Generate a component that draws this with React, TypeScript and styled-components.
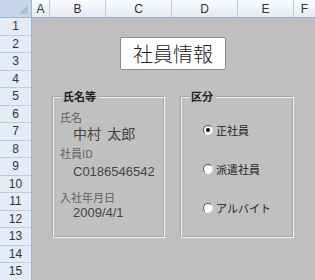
import React from "react";
import styled, { createGlobalStyle } from "styled-components";

const GlobalStyle = createGlobalStyle`
  html, body {
    margin: 0;
    padding: 0;
    background: #c0c0c0;
  }
`;

const Sheet = styled.div`
  width: 315px;
  height: 280px;
  overflow: hidden;
  display: grid;
  grid-template-columns: 32px 1fr;
  grid-template-rows: 18px 1fr;
  background: #c0c0c0;
  font-family: "Liberation Sans", Arial, sans-serif;
`;

const Corner = styled.div`
  background: #c7d6ec;
  border-right: 1px solid #9eb6ce;
  border-bottom: 1px solid #9eb6ce;
  box-sizing: border-box;
  display: flex;
  align-items: flex-end;
  justify-content: flex-end;
  padding: 0 3px 3px 0;
`;

const ColHeaders = styled.div`
  display: flex;
  border-bottom: 1px solid #9eb6ce;
  box-sizing: border-box;
`;

const ColCell = styled.div<{ $w: number }>`
  flex: 0 0 ${(p) => p.$w}px;
  box-sizing: border-box;
  border-right: 1px solid #bccbe0;
  background: linear-gradient(#fafcfe, #e3eaf4);
  color: #333;
  font-size: 12px;
  display: flex;
  align-items: center;
  justify-content: center;
  &:last-child {
    flex: 1;
    border-right: none;
  }
`;

const RowHeaders = styled.div`
  display: flex;
  flex-direction: column;
  border-right: 1px solid #9eb6ce;
`;

const RowCell = styled.div`
  flex: 0 0 17.5px;
  box-sizing: border-box;
  border-bottom: 1px solid #bccbe0;
  background: #e4ecf7;
  color: #333;
  font-size: 12px;
  display: flex;
  align-items: center;
  justify-content: center;
`;

const Canvas = styled.div`
  display: flex;
  flex-direction: column;
  padding-top: 19px;
  font-family: "Noto Sans CJK JP", "Liberation Sans", sans-serif;
`;

const TitleBox = styled.div`
  margin-left: 88px;
  width: 106px;
  height: 33px;
  box-sizing: border-box;
  background: #fff;
  border: 1px solid #8a8a8a;
  border-radius: 2px;
  display: flex;
  align-items: center;
  justify-content: center;
  font-size: 20px;
  font-weight: 300;
  color: #222;
`;

const Groups = styled.div`
  display: flex;
  gap: 15px;
  margin-top: 20px;
  margin-left: 20px;
`;

const Group = styled.fieldset<{ $w: number }>`
  margin: 0;
  width: ${(p) => p.$w}px;
  height: 148px;
  box-sizing: border-box;
  padding: 0 0 0 7px;
  border: 1px solid;
  border-color: #a4a4a4 #f4f4ec #f4f4ec #a4a4a4;
  box-shadow: inset 1px 1px 0 #f4f4ec, inset -1px -1px 0 #a4a4a4;
  display: flex;
  flex-direction: column;
`;

const Legend = styled.legend`
  margin-left: 1px;
  padding: 0 3px 0 2px;
  background: #c0c0c0;
  font-size: 11px;
  font-weight: bold;
  line-height: 12px;
  color: #222;
`;

const Field = styled.div<{ $mt: number }>`
  margin-top: ${(p) => p.$mt}px;
  display: flex;
  flex-direction: column;
`;

const Label = styled.div`
  font-size: 11px;
  line-height: 14px;
  color: #606060;
`;

const Value = styled.div<{ $mono?: boolean; $lh?: number }>`
  margin-left: 13px;
  font-size: ${(p) => (p.$mono ? 13 : 14)}px;
  line-height: ${(p) => p.$lh ?? 19}px;
  color: #444;
  font-family: ${(p) =>
    p.$mono ? `"Liberation Sans", Arial, sans-serif` : `"Noto Sans CJK JP", sans-serif`};
`;

const RadioList = styled.div`
  display: flex;
  flex-direction: column;
  gap: 28px;
  margin-top: 22px;
  margin-left: 15px;
`;

const RadioRow = styled.div`
  display: flex;
  align-items: center;
  gap: 3px;
  height: 11px;
  font-size: 11px;
  color: #222;
`;

const RadioDot = styled.span<{ $on?: boolean }>`
  width: 10px;
  height: 10px;
  box-sizing: border-box;
  border-radius: 50%;
  background: #fff;
  border: 1px solid;
  border-color: #555 #e8e8e8 #f4f4f4 #555;
  display: flex;
  align-items: center;
  justify-content: center;
  &::after {
    content: "";
    width: 4px;
    height: 4px;
    border-radius: 50%;
    background: ${(p) => (p.$on ? "#000" : "transparent")};
  }
`;

const columns: [string, number][] = [
  ["A", 18],
  ["B", 56],
  ["C", 66],
  ["D", 66],
  ["E", 56],
  ["F", 21],
];

const kubun = [
  { label: "正社員", on: true },
  { label: "派遣社員", on: false },
  { label: "アルバイト", on: false },
];

const App: React.FC = () => {
  return (
    <>
      <GlobalStyle />
      <Sheet>
        <Corner>
          <svg width="9" height="9" viewBox="0 0 9 9">
            <polygon points="9,0 9,9 0,9" fill="#aebdd3" />
          </svg>
        </Corner>
        <ColHeaders>
          {columns.map(([name, w]) => (
            <ColCell key={name} $w={w}>
              {name}
            </ColCell>
          ))}
        </ColHeaders>
        <RowHeaders>
          {Array.from({ length: 15 }, (_, i) => (
            <RowCell key={i}>{i + 1}</RowCell>
          ))}
        </RowHeaders>
        <Canvas>
          <TitleBox>社員情報</TitleBox>
          <Groups>
            <Group $w={113}>
              <Legend>氏名等</Legend>
              <Field $mt={8}>
                <Label>氏名</Label>
                <Value>中村&nbsp;&nbsp;太郎</Value>
              </Field>
              <Field $mt={3}>
                <Label>社員ID</Label>
                <Value $mono $lh={24}>C0186546542</Value>
              </Field>
              <Field $mt={6}>
                <Label>入社年月日</Label>
                <Value $mono $lh={17}>2009/4/1</Value>
              </Field>
            </Group>
            <Group $w={114}>
              <Legend>区分</Legend>
              <RadioList>
                {kubun.map((k) => (
                  <RadioRow key={k.label}>
                    <RadioDot $on={k.on} />
                    {k.label}
                  </RadioRow>
                ))}
              </RadioList>
            </Group>
          </Groups>
        </Canvas>
      </Sheet>
    </>
  );
};

export default App;
